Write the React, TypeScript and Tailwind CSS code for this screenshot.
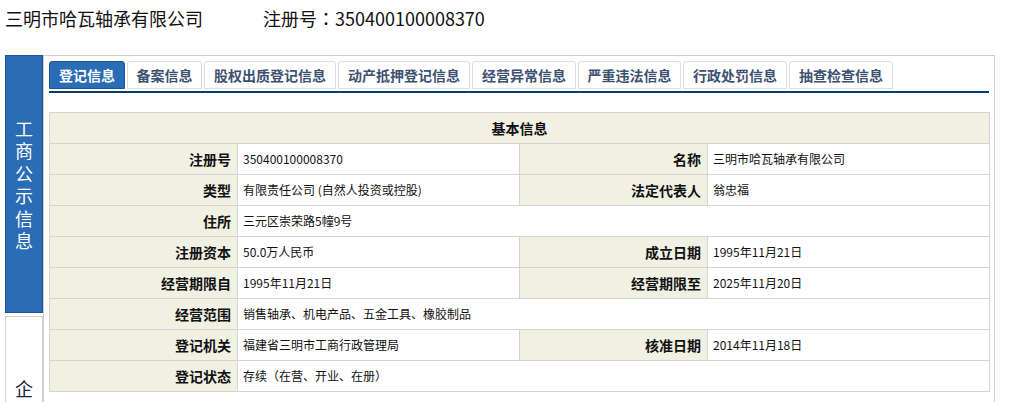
import React from "react";

const tabs: { label: string; w: string; active?: boolean }[] = [
  { label: "登记信息", w: "w-[76px]", active: true },
  { label: "备案信息", w: "w-[75px]" },
  { label: "股权出质登记信息", w: "w-[132px]" },
  { label: "动产抵押登记信息", w: "w-[132px]" },
  { label: "经营异常信息", w: "w-[104px]" },
  { label: "严重违法信息", w: "w-[103px]" },
  { label: "行政处罚信息", w: "w-[104px]" },
  { label: "抽查检查信息", w: "w-[104px]" },
];

type Row = [string, string, string?, string?];
const rows: Row[] = [
  ["注册号", "350400100008370", "名称", "三明市哈瓦轴承有限公司"],
  ["类型", "有限责任公司 (自然人投资或控股)", "法定代表人", "翁忠福"],
  ["住所", "三元区崇荣路5幢9号"],
  ["注册资本", "50.0万人民币", "成立日期", "1995年11月21日"],
  ["经营期限自", "1995年11月21日", "经营期限至", "2025年11月20日"],
  ["经营范围", "销售轴承、机电产品、五金工具、橡胶制品"],
  ["登记机关", "福建省三明市工商行政管理局", "核准日期", "2014年11月18日"],
  ["登记状态", "存续（在营、开业、在册）"],
];

const font = { fontFamily: '"Noto Sans CJK SC", "Noto Sans", sans-serif' };

export default function App() {
  return (
    <div
      className="w-[1012px] h-[402px] overflow-hidden bg-white text-black"
      style={font}
    >
      <div className="h-[55px] pl-[5px] pt-[5px] flex text-[18px] leading-[26px] text-[#111]">
        <span className="w-[258px]">三明市哈瓦轴承有限公司</span>
        <span>
          注册号
          <span className="[font-family:'Noto_Sans_CJK_JP',sans-serif]">：</span>
          350400100008370
        </span>
      </div>
      <div className="flex pl-[5px]">
        <div className="w-[38px] flex flex-col shrink-0">
          <div className="h-[258px] bg-[#2a6cb5] border border-[#1d5797] flex flex-col items-center justify-center text-white text-[18px] leading-[22.5px]">
            <span>工</span>
            <span>商</span>
            <span>公</span>
            <span>示</span>
            <span>信</span>
            <span>息</span>
          </div>
          <div className="mt-[3px] h-[120px] border border-[#d0d0d0] flex flex-col items-center pt-[60px] text-[18px] leading-[22.5px] text-[#1a2340]">
            <span>企</span>
          </div>
        </div>
        <div className="w-[952px] h-[400px] border border-[#cfcfcf] px-[5px] pt-[5px]">
          <div className="flex gap-[2px] h-[28px]">
            {tabs.map((t) => (
              <div
                key={t.label}
                className={
                  t.active
                    ? `${t.w} shrink-0 h-[28px] rounded-t-[3px] bg-[#2a6cb5] border border-[#1d5797] flex items-center justify-center text-white text-[14px] font-bold`
                    : `${t.w} shrink-0 h-[28px] rounded-t-[3px] bg-white border border-[#dddddd] flex items-center justify-center text-[#3d5170] text-[14px] font-bold`
                }
              >
                {t.label}
              </div>
            ))}
          </div>
          <div className="mt-[2px] h-[2px] w-[940px] bg-[#0b3a6e]" />
          <table className="mt-[19px] w-[940px] border-collapse table-fixed">
            <colgroup>
              <col className="w-[188px]" />
              <col className="w-[282px]" />
              <col className="w-[188px]" />
              <col className="w-[282px]" />
            </colgroup>
            <tbody>
              <tr className="h-[31px]">
                <td
                  colSpan={4}
                  className="border border-[#d4d4d4] bg-[#f0f0e3] text-center text-[14px] font-bold text-[#111]"
                >
                  基本信息
                </td>
              </tr>
              {rows.map((r) => (
                <tr key={r[0]} className="h-[31px]">
                  <td className="border border-[#d4d4d4] bg-[#f0f0e3] text-right pr-[6px] text-[14px] font-bold text-[#111]">
                    {r[0]}
                  </td>
                  {r[2] ? (
                    <>
                      <td className="border border-[#d4d4d4] pl-[5px] text-[12px] text-[#111]">
                        {r[1]}
                      </td>
                      <td className="border border-[#d4d4d4] bg-[#f0f0e3] text-right pr-[6px] text-[14px] font-bold text-[#111]">
                        {r[2]}
                      </td>
                      <td className="border border-[#d4d4d4] pl-[5px] text-[12px] text-[#111]">
                        {r[3]}
                      </td>
                    </>
                  ) : (
                    <td
                      colSpan={3}
                      className="border border-[#d4d4d4] pl-[5px] text-[12px] text-[#111]"
                    >
                      {r[1]}
                    </td>
                  )}
                </tr>
              ))}
            </tbody>
          </table>
        </div>
      </div>
    </div>
  );
}
